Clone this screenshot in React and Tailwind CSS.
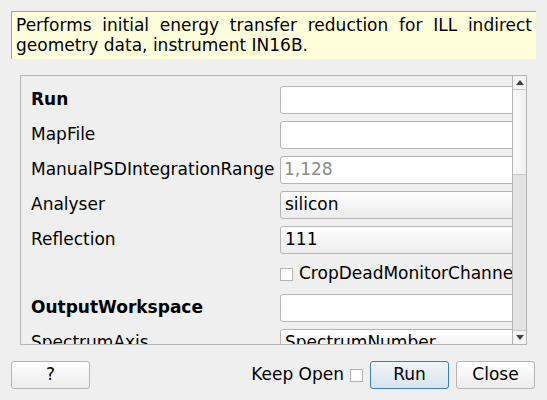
import React from 'react';

// Qt-like algorithm dialog
const font = { fontFamily: '"DejaVu Sans", sans-serif' };

const LineEdit = ({ value = '', placeholder }) => (
    <div className="h-[28px] w-full bg-white border border-[#b4b4b4] rounded-[3px] flex items-center px-[3px] text-[17px]">
        {value ? (
            <span className="text-black">{value}</span>
        ) : (
            <span className="text-[#8a8a8a]">{placeholder}</span>
        )}
    </div>
);

const Combo = ({ value }) => (
    <div className="h-[28px] w-full bg-gradient-to-b from-white to-[#ececec] border border-[#b4b4b4] rounded-[3px] flex items-center px-[4px] text-[17px] text-black">
        {value}
    </div>
);

const Check = () => (
    <span className="inline-block w-[13px] h-[13px] bg-white border border-[#b4b4b4] shrink-0" />
);

const Label = ({ children, bold }) => (
    <div className={`h-[28px] flex items-center text-[17px] text-black whitespace-nowrap ${bold ? 'font-bold' : ''}`}>
        {children}
    </div>
);

const rows = [
    { label: 'Run', bold: true, field: <LineEdit /> },
    { label: 'MapFile', field: <LineEdit /> },
    { label: 'ManualPSDIntegrationRange', field: <LineEdit placeholder="1,128" /> },
    { label: 'Analyser', field: <Combo value="silicon" /> },
    { label: 'Reflection', field: <Combo value="111" /> },
];

const Button = ({ children, primary }) => (
    <button
        className={`w-[79px] h-[28px] rounded-[3px] border text-[17px] text-black flex items-center justify-center ${
            primary
                ? 'border-[#3b7db4] bg-gradient-to-b from-[#f1f5f9] to-[#d9e3ed]'
                : 'border-[#b4b4b4] bg-gradient-to-b from-white to-[#ececec]'
        }`}
    >
        {children}
    </button>
);

export default function App() {
    return (
        <div className="w-[547px] h-[400px] bg-[#efefef] overflow-hidden flex flex-col" style={font}>
            {/* description */}
            <div className="mx-[11px] mt-[11px] h-[48px] bg-[#ffffdc] border-t border-l border-[#a0a0a0] pl-[4px] pr-[4px] pt-[3px] text-[17px] leading-[20px] text-black text-justify">
                Performs initial energy transfer reduction for ILL indirect geometry data, instrument IN16B.
            </div>

            {/* property scroll area */}
            <div className="ml-[20px] mt-[16px] w-[507px] h-[270px] border border-[#b4b4b4] flex overflow-hidden">
                <div className="flex-1 overflow-hidden pl-[10px] pt-[10px]">
                    <div className="w-[495px] grid grid-cols-[249px_1fr] gap-y-[7px]">
                        {rows.map((r) => (
                            <React.Fragment key={r.label}>
                                <Label bold={r.bold}>{r.label}</Label>
                                {r.field}
                            </React.Fragment>
                        ))}
                        <div className="h-[26px]" />
                        <div className="h-[26px] flex items-center gap-[6px] text-[17px] text-black whitespace-nowrap">
                            <Check />
                            <span>CropDeadMonitorChannels</span>
                        </div>
                        <Label bold>OutputWorkspace</Label>
                        <LineEdit />
                        <Label>SpectrumAxis</Label>
                        <Combo value="SpectrumNumber" />
                    </div>
                </div>

                {/* scrollbar */}
                <div className="w-[14px] border-l border-[#b4b4b4] flex flex-col bg-[#e3e3e3]">
                    <div className="h-[14px] bg-[#f4f4f4] border-b border-[#c8c8c8] flex items-center justify-center">
                        <svg width="8" height="5" viewBox="0 0 8 5">
                            <path d="M0 5 L4 0 L8 5 Z" fill="#404040" />
                        </svg>
                    </div>
                    <div className="h-[85px] bg-gradient-to-r from-[#fafafa] to-[#f0f0f0] border-b border-[#c8c8c8]" />
                    <div className="flex-1" />
                    <div className="h-[14px] bg-[#f4f4f4] border-t border-[#c8c8c8] flex items-center justify-center">
                        <svg width="8" height="5" viewBox="0 0 8 5">
                            <path d="M0 0 L8 0 L4 5 Z" fill="#404040" />
                        </svg>
                    </div>
                </div>
            </div>

            {/* buttons */}
            <div className="mt-[16px] pl-[11px] pr-[12px] flex items-center">
                <Button>?</Button>
                <div className="flex-1" />
                <span className="text-[17px] text-black mr-[6px]">Keep Open</span>
                <Check />
                <div className="w-[7px]" />
                <Button primary>Run</Button>
                <div className="w-[7px]" />
                <Button>Close</Button>
            </div>
        </div>
    );
}
